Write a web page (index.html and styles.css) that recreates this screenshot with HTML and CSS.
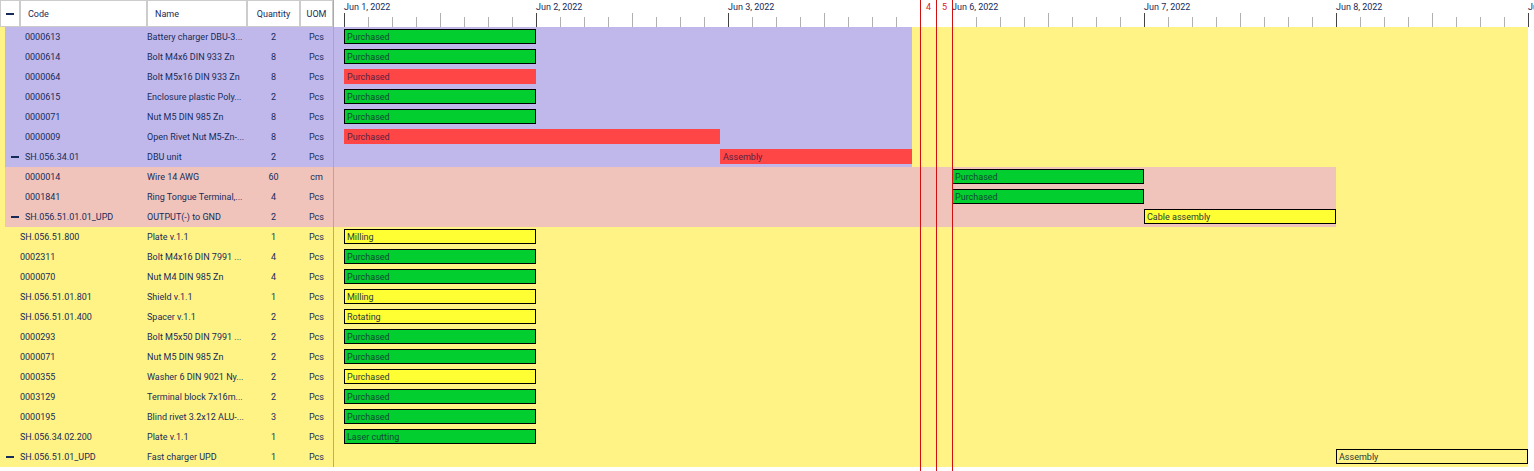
FILE: index.html
```html
<!DOCTYPE html>
<html lang="en">
<head>
<meta charset="utf-8">
<title>Production schedule</title>
<link rel="stylesheet" href="styles.css">
</head>
<body>
<main class="schedule">
  <table class="parts">
    <colgroup><col class="col-toggle"><col class="col-code"><col class="col-name"><col class="col-qty"><col class="col-uom"></colgroup>
    <thead>
      <tr><th><button class="toggle" type="button" aria-label="Collapse all"></button></th><th>Code</th><th>Name</th><th class="center">Quantity</th><th class="center">UOM</th></tr>
    </thead>
    <tbody>
      <tr class="nested violet"><td></td><td>0000613</td><td>Battery charger DBU-3...</td><td>2</td><td>Pcs</td></tr>
      <tr class="nested violet"><td></td><td>0000614</td><td>Bolt M4x6 DIN 933 Zn</td><td>8</td><td>Pcs</td></tr>
      <tr class="nested violet"><td></td><td>0000064</td><td>Bolt M5x16 DIN 933 Zn</td><td>8</td><td>Pcs</td></tr>
      <tr class="nested violet"><td></td><td>0000615</td><td>Enclosure plastic Poly...</td><td>2</td><td>Pcs</td></tr>
      <tr class="nested violet"><td></td><td>0000071</td><td>Nut M5 DIN 985 Zn</td><td>8</td><td>Pcs</td></tr>
      <tr class="nested violet"><td></td><td>0000009</td><td>Open Rivet Nut M5-Zn-...</td><td>8</td><td>Pcs</td></tr>
      <tr class="nested violet"><td><button class="toggle" type="button" aria-label="Collapse SH.056.34.01"></button></td><td>SH.056.34.01</td><td>DBU unit</td><td>2</td><td>Pcs</td></tr>
      <tr class="nested rose"><td></td><td>0000014</td><td>Wire 14 AWG</td><td>60</td><td>cm</td></tr>
      <tr class="nested rose"><td></td><td>0001841</td><td>Ring Tongue Terminal,...</td><td>4</td><td>Pcs</td></tr>
      <tr class="nested rose"><td><button class="toggle" type="button" aria-label="Collapse SH.056.51.01.01_UPD"></button></td><td>SH.056.51.01.01_UPD</td><td>OUTPUT(-) to GND</td><td>2</td><td>Pcs</td></tr>
      <tr><td></td><td>SH.056.51.800</td><td>Plate v.1.1</td><td>1</td><td>Pcs</td></tr>
      <tr><td></td><td>0002311</td><td>Bolt M4x16 DIN 7991 ...</td><td>4</td><td>Pcs</td></tr>
      <tr><td></td><td>0000070</td><td>Nut M4 DIN 985 Zn</td><td>4</td><td>Pcs</td></tr>
      <tr><td></td><td>SH.056.51.01.801</td><td>Shield v.1.1</td><td>1</td><td>Pcs</td></tr>
      <tr><td></td><td>SH.056.51.01.400</td><td>Spacer v.1.1</td><td>2</td><td>Pcs</td></tr>
      <tr><td></td><td>0000293</td><td>Bolt M5x50 DIN 7991 ...</td><td>2</td><td>Pcs</td></tr>
      <tr><td></td><td>0000071</td><td>Nut M5 DIN 985 Zn</td><td>2</td><td>Pcs</td></tr>
      <tr><td></td><td>0000355</td><td>Washer 6 DIN 9021 Ny...</td><td>2</td><td>Pcs</td></tr>
      <tr><td></td><td>0003129</td><td>Terminal block 7x16m...</td><td>2</td><td>Pcs</td></tr>
      <tr><td></td><td>0000195</td><td>Blind rivet 3.2x12 ALU-...</td><td>3</td><td>Pcs</td></tr>
      <tr><td></td><td>SH.056.34.02.200</td><td>Plate v.1.1</td><td>1</td><td>Pcs</td></tr>
      <tr><td><button class="toggle" type="button" aria-label="Collapse SH.056.51.01_UPD"></button></td><td>SH.056.51.01_UPD</td><td>Fast charger UPD</td><td>1</td><td>Pcs</td></tr>
    </tbody>
  </table>

  <section class="chart" aria-label="Timeline">
    <div class="timeline">
      <!-- One column is one hour; the weekend is compressed to two columns a day. -->
      <div class="zone zone-base"></div>
      <div class="zone violet" style="--row: 2; --rows: 7; --to: 73"></div>
      <div class="zone rose" style="--row: 9; --rows: 3; --to: 126"></div>

      <div class="day" style="--from: 2">Jun 1, 2022</div>
      <div class="day" style="--from: 26">Jun 2, 2022</div>
      <div class="day" style="--from: 50">Jun 3, 2022</div>
      <div class="day" style="--from: 78">Jun 6, 2022</div>
      <div class="day" style="--from: 102">Jun 7, 2022</div>
      <div class="day" style="--from: 126">Jun 8, 2022</div>
      <div class="day" style="--from: 150">Jun 9, 2022</div>

      <div class="bar done" style="--row: 2; --from: 2; --to: 26">Purchased</div>
      <div class="bar done" style="--row: 3; --from: 2; --to: 26">Purchased</div>
      <div class="bar late" style="--row: 4; --from: 2; --to: 26">Purchased</div>
      <div class="bar done" style="--row: 5; --from: 2; --to: 26">Purchased</div>
      <div class="bar done" style="--row: 6; --from: 2; --to: 26">Purchased</div>
      <div class="bar late" style="--row: 7; --from: 2; --to: 49">Purchased</div>
      <div class="bar late" style="--row: 8; --from: 49; --to: 73">Assembly</div>
      <div class="bar done" style="--row: 9; --from: 78; --to: 102">Purchased</div>
      <div class="bar done" style="--row: 10; --from: 78; --to: 102">Purchased</div>
      <div class="bar active" style="--row: 11; --from: 102; --to: 126">Cable assembly</div>
      <div class="bar active" style="--row: 12; --from: 2; --to: 26">Milling</div>
      <div class="bar done" style="--row: 13; --from: 2; --to: 26">Purchased</div>
      <div class="bar done" style="--row: 14; --from: 2; --to: 26">Purchased</div>
      <div class="bar active" style="--row: 15; --from: 2; --to: 26">Milling</div>
      <div class="bar active" style="--row: 16; --from: 2; --to: 26">Rotating</div>
      <div class="bar done" style="--row: 17; --from: 2; --to: 26">Purchased</div>
      <div class="bar done" style="--row: 18; --from: 2; --to: 26">Purchased</div>
      <div class="bar active" style="--row: 19; --from: 2; --to: 26">Purchased</div>
      <div class="bar done" style="--row: 20; --from: 2; --to: 26">Purchased</div>
      <div class="bar done" style="--row: 21; --from: 2; --to: 26">Purchased</div>
      <div class="bar done" style="--row: 22; --from: 2; --to: 26">Laser cutting</div>
      <div class="bar" style="--row: 23; --from: 126; --to: 150">Assembly</div>

      <div class="weekend" style="--from: 74">4</div>
      <div class="weekend" style="--from: 76">5</div>
      <div class="weekend" style="--from: 78"></div>
    </div>
  </section>
</main>
</body>
</html>
```
FILE: styles.css
```css
:root {
  --ink: #172b5a;
  --base: #fff385;
  --violet: #c0b8ea;
  --rose: #f0c4ba;
  --line: #cccccc;
}

* {
  box-sizing: border-box;
}

body {
  margin: 0;
  background: #ffffff;
  color: var(--ink);
  font: 9px/12px Roboto, sans-serif;
}

.schedule {
  display: flex;
  align-items: flex-start;
  min-height: 100vh;
  overflow: hidden;
}

/* Parts list */

.parts {
  flex: none;
  width: 334px;
  table-layout: fixed;
  border-collapse: separate;
  border-spacing: 0;
  border-right: 1px solid #aaaaaa;
}

.col-toggle { width: 20px; }
.col-code { width: 127px; }
.col-name { width: 100px; }
.col-qty { width: 53px; }
.col-uom { width: 33px; }

.parts th {
  height: 27px;
  padding: 0 7px;
  border: 1px solid var(--line);
  font-weight: 400;
  text-align: left;
}

.parts th:first-child {
  padding: 0 5px;
}

.parts th.center {
  padding: 0;
  text-align: center;
}

.parts td {
  height: 20px;
  padding: 0;
  background: var(--base);
  white-space: nowrap;
}

.parts td:first-child {
  padding-left: 6px;
}

.parts td:nth-child(n + 4) {
  text-align: center;
}

.parts .violet td { background-color: var(--violet); }
.parts .rose td { background-color: var(--rose); }

.parts .nested td:first-child {
  border-left: 5px solid var(--base);
}

.parts .nested td:nth-child(2) {
  padding-left: 5px;
}

.toggle {
  display: block;
  width: 8px;
  height: 12px;
  padding: 0;
  border: 0;
  background: linear-gradient(var(--ink), var(--ink)) center / 8px 2px no-repeat;
  cursor: pointer;
}

/* Timeline */

.chart {
  flex: 1;
  min-width: 0;
  overflow: hidden;
}

.timeline {
  display: grid;
  grid-template-columns: 10px repeat(148, 8px) 192px;
  grid-template-rows: 27px repeat(22, 20px) 1fr;
  min-height: 100vh;
}

.zone {
  grid-column: 1 / var(--to);
  grid-row: var(--row) / span var(--rows);
}

.zone-base {
  --row: 2;
  --rows: 22;
  --to: 150;
  background: var(--base);
}

.zone.violet { background: var(--violet); }
.zone.rose { background: var(--rose); }

.day {
  grid-column: var(--from) / span 24;
  grid-row: 1;
  padding-top: 1px;
  white-space: nowrap;
  background:
    linear-gradient(#444444, #444444) 0 100% / 1px 14px no-repeat,
    linear-gradient(#b0b0b0, #b0b0b0) 96px 100% / 1px 14px no-repeat,
    linear-gradient(to right, #b0b0b0 1px, transparent 1px) 0 100% / 24px 10px repeat-x;
}

.day:nth-last-child(1 of .day) {
  grid-column: 150 / 151;
}

.bar {
  grid-column: var(--from) / var(--to);
  grid-row: var(--row);
  height: 15px;
  margin-top: 2px;
  padding: 1px 0 0 2px;
  border: 1px solid #000000;
  line-height: 12px;
  color: #2b3a3a;
  white-space: nowrap;
}

.bar.done { background: #03ce2f; color: #0b4a37; }
.bar.late { background: #ff4646; border-color: #ff4646; color: #5a2040; }
.bar.active { background: #ffff33; }

.weekend {
  grid-column: var(--from) / span 2;
  grid-row: 1 / -1;
  padding-top: 1px;
  border-left: 1px solid #d01010;
  color: #e02020;
  text-align: center;
}
```
